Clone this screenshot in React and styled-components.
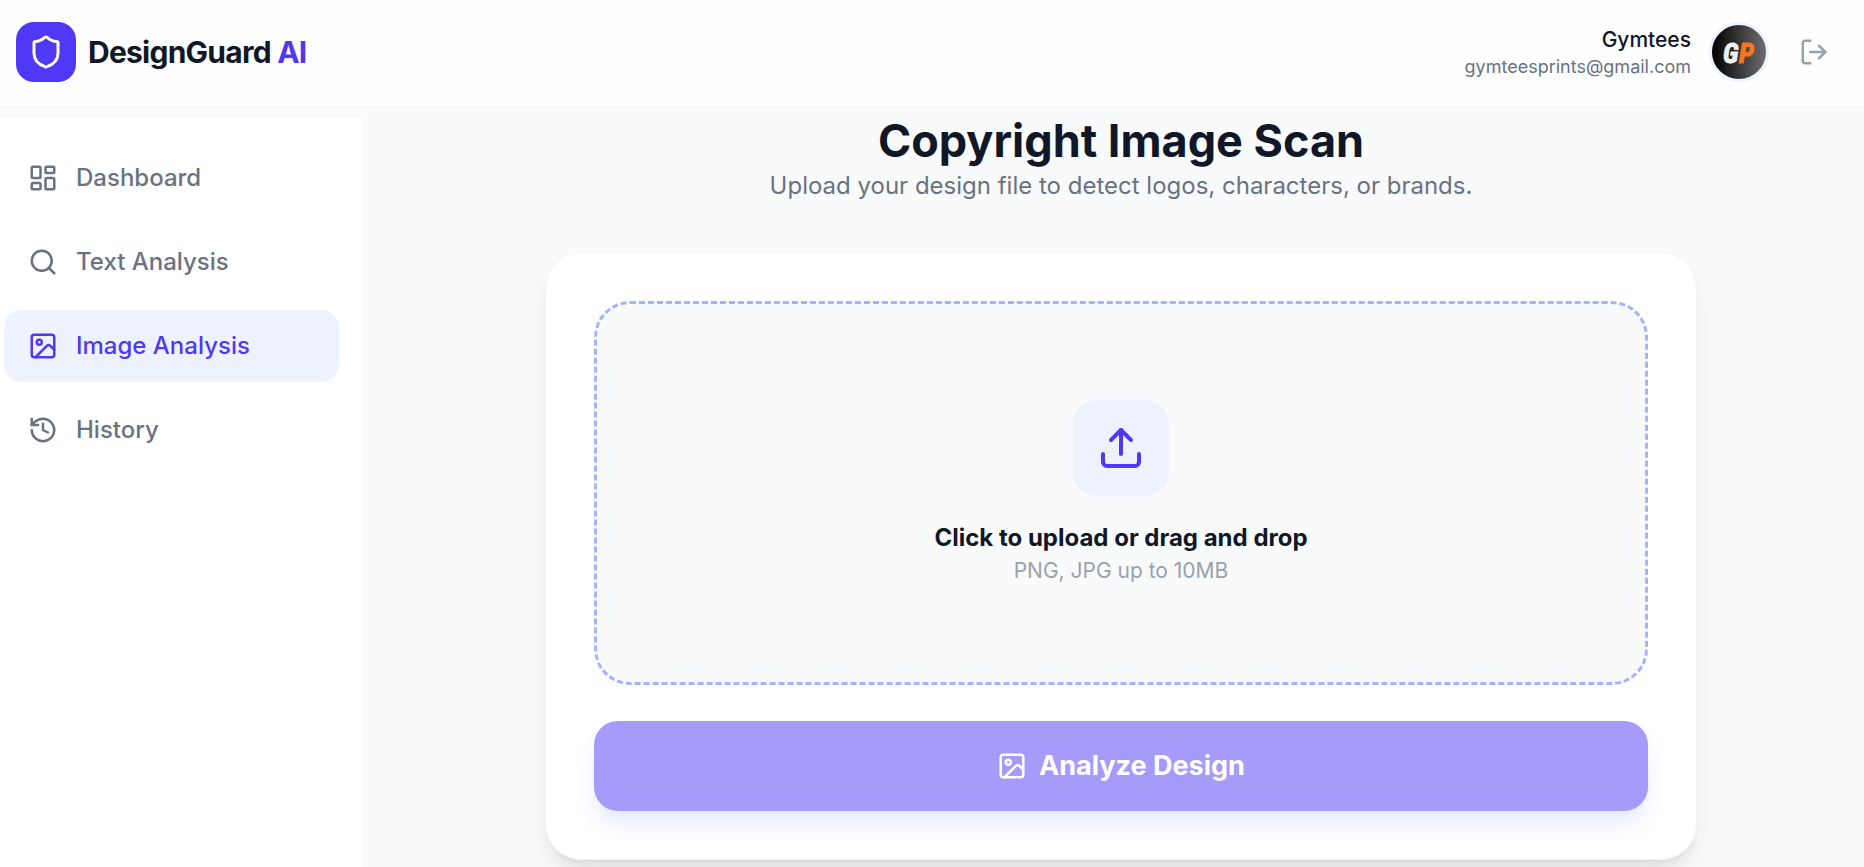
import React from "react";
import styled, { createGlobalStyle } from "styled-components";
import { Shield, LayoutDashboard, Search, Image, History, Upload, LogOut } from "lucide-react";

const color = {
  page: "#f9fafb",
  line: "#f3f4f6",
  ink: "#101828",
  muted: "#6a7282",
  faint: "#99a1af",
  brand: "#4f39f6",
  tint: "#eef2ff",
};

const GlobalStyle = createGlobalStyle`
  *, *::before, *::after { box-sizing: border-box; }
  body {
    margin: 0;
    background: ${color.page};
    color: ${color.ink};
    font-family: Inter, "Liberation Sans", sans-serif;
    font-size: 24px;
    line-height: 36px;
  }
  h1, p { margin: 0; }
  svg { display: block; flex-shrink: 0; }
`;

const Page = styled.div`
  min-height: 100vh;
  display: flex;
  flex-direction: column;
`;

const Header = styled.header`
  display: flex;
  align-items: center;
  justify-content: space-between;
  padding: 22px 23px 24px 16px;
  background: #fefefe;
  border-bottom: 1px solid ${color.line};
`;

const Brand = styled.a`
  display: flex;
  align-items: center;
  gap: 12px;
  color: ${color.ink};
  text-decoration: none;
`;

const BrandMark = styled.span`
  display: grid;
  place-items: center;
  width: 60px;
  height: 60px;
  border-radius: 18px;
  background: ${color.brand};
  color: #fff;
`;

const BrandName = styled.span`
  font-size: 30px;
  font-weight: 700;
  letter-spacing: -0.025em;
`;

const BrandAccent = styled.span`
  color: ${color.brand};
`;

const Account = styled.div`
  display: flex;
  align-items: center;
  gap: 18px;
`;

const AccountText = styled.div`
  text-align: right;
`;

const AccountName = styled.p`
  font-size: 21px;
  line-height: 30px;
  font-weight: 500;
`;

const AccountEmail = styled.p`
  font-size: 18px;
  line-height: 24px;
  color: ${color.muted};
`;

const Avatar = styled.div`
  width: 60px;
  height: 60px;
  border: 3px solid ${color.tint};
  border-radius: 50%;
  background: linear-gradient(90deg, #000, #6e6e6e);
  overflow: hidden;
`;

const IconButton = styled.button`
  padding: 12px;
  border: 0;
  border-radius: 12px;
  background: none;
  color: ${color.faint};
  cursor: pointer;
`;

const Body = styled.div`
  flex: 1;
  display: flex;
`;

const Sidebar = styled.nav`
  flex: 0 0 364px;
  display: flex;
  flex-direction: column;
  gap: 12px;
  margin-top: 11px;
  padding: 24px 24px 24px 4px;
  background: #fff;
  border-right: 1px solid ${color.line};
`;

const NavItem = styled.a`
  display: flex;
  align-items: center;
  gap: 18px;
  padding: 18px 24px;
  border-radius: 18px;
  font-weight: 500;
  text-decoration: none;
  color: ${(p) => (p.$active ? color.brand : color.muted)};
  background: ${(p) => (p.$active ? color.tint : "transparent")};
`;

const Main = styled.main`
  flex: 1;
  min-width: 0;
  padding: 7px 24px 0 38px;
`;

const Content = styled.div`
  max-width: 1152px;
  margin: 0 auto;
`;

const Intro = styled.div`
  margin-bottom: 48px;
  text-align: center;
`;

const Title = styled.h1`
  font-size: 45px;
  line-height: 54px;
  font-weight: 700;
`;

const Subtitle = styled.p`
  color: ${color.muted};
`;

const Card = styled.form`
  display: flex;
  flex-direction: column;
  gap: 36px;
  padding: 48px;
  background: #fff;
  border: 1px solid ${color.line};
  border-radius: 36px;
  box-shadow: 0 15px 23px -5px rgba(0, 0, 0, 0.1), 0 6px 9px -6px rgba(0, 0, 0, 0.1);
`;

const DropZone = styled.label`
  display: flex;
  flex-direction: column;
  align-items: center;
  padding: 96px 24px;
  background: ${color.page};
  border: 3px dashed #a3b3ff;
  border-radius: 36px;
  cursor: pointer;
`;

const FileInput = styled.input`
  position: absolute;
  width: 1px;
  height: 1px;
  opacity: 0;
`;

const UploadTile = styled.span`
  display: grid;
  place-items: center;
  width: 96px;
  height: 96px;
  margin-bottom: 24px;
  border-radius: 24px;
  background: ${color.tint};
  color: ${color.brand};
`;

const DropTitle = styled.span`
  font-weight: 700;
`;

const DropHint = styled.span`
  font-size: 21px;
  line-height: 30px;
  color: ${color.faint};
`;

const SubmitButton = styled.button`
  display: flex;
  align-items: center;
  justify-content: center;
  gap: 12px;
  height: 90px;
  border: 0;
  border-radius: 24px;
  background: ${color.brand};
  color: #fff;
  font: inherit;
  font-size: 27px;
  font-weight: 700;
  opacity: 0.5;
  box-shadow: 0 15px 23px -5px #c6d2ff, 0 6px 9px -6px #c6d2ff;
`;

const navItems = [
  { label: "Dashboard", icon: LayoutDashboard },
  { label: "Text Analysis", icon: Search },
  { label: "Image Analysis", icon: Image, active: true },
  { label: "History", icon: History },
];

function AvatarArt() {
  return (
    <svg
      width="54"
      height="54"
      viewBox="0 0 54 54"
      fontFamily='"Liberation Sans Narrow", "Roboto Condensed", "DejaVu Sans Condensed", sans-serif'
      fontStyle="italic"
      fontWeight="700"
      fontSize="27"
    >
      <text x="11" y="38" fill="#f1f1f1" stroke="#f1f1f1">G</text>
      <text x="27" y="38" fill="#f9761f" stroke="#f9761f">P</text>
    </svg>
  );
}

export default function App() {
  return (
    <Page>
      <GlobalStyle />
      <Header>
        <Brand href="#">
          <BrandMark><Shield size={36} /></BrandMark>
          <BrandName>DesignGuard <BrandAccent>AI</BrandAccent></BrandName>
        </Brand>
        <Account>
          <AccountText>
            <AccountName>Gymtees</AccountName>
            <AccountEmail>gymteesprints@gmail.com</AccountEmail>
          </AccountText>
          <Avatar><AvatarArt /></Avatar>
          <IconButton type="button" aria-label="Log out"><LogOut size={30} /></IconButton>
        </Account>
      </Header>
      <Body>
        <Sidebar>
          {navItems.map(({ label, icon: Icon, active }) => (
            <NavItem key={label} href="#" $active={active}>
              <Icon size={30} />
              {label}
            </NavItem>
          ))}
        </Sidebar>
        <Main>
          <Content>
            <Intro>
              <Title>Copyright Image Scan</Title>
              <Subtitle>Upload your design file to detect logos, characters, or brands.</Subtitle>
            </Intro>
            <Card>
              <DropZone>
                <FileInput type="file" accept="image/png,image/jpeg" />
                <UploadTile><Upload size={48} /></UploadTile>
                <DropTitle>Click to upload or drag and drop</DropTitle>
                <DropHint>PNG, JPG up to 10MB</DropHint>
              </DropZone>
              <SubmitButton type="submit" disabled>
                <Image size={30} />
                Analyze Design
              </SubmitButton>
            </Card>
          </Content>
        </Main>
      </Body>
    </Page>
  );
}
